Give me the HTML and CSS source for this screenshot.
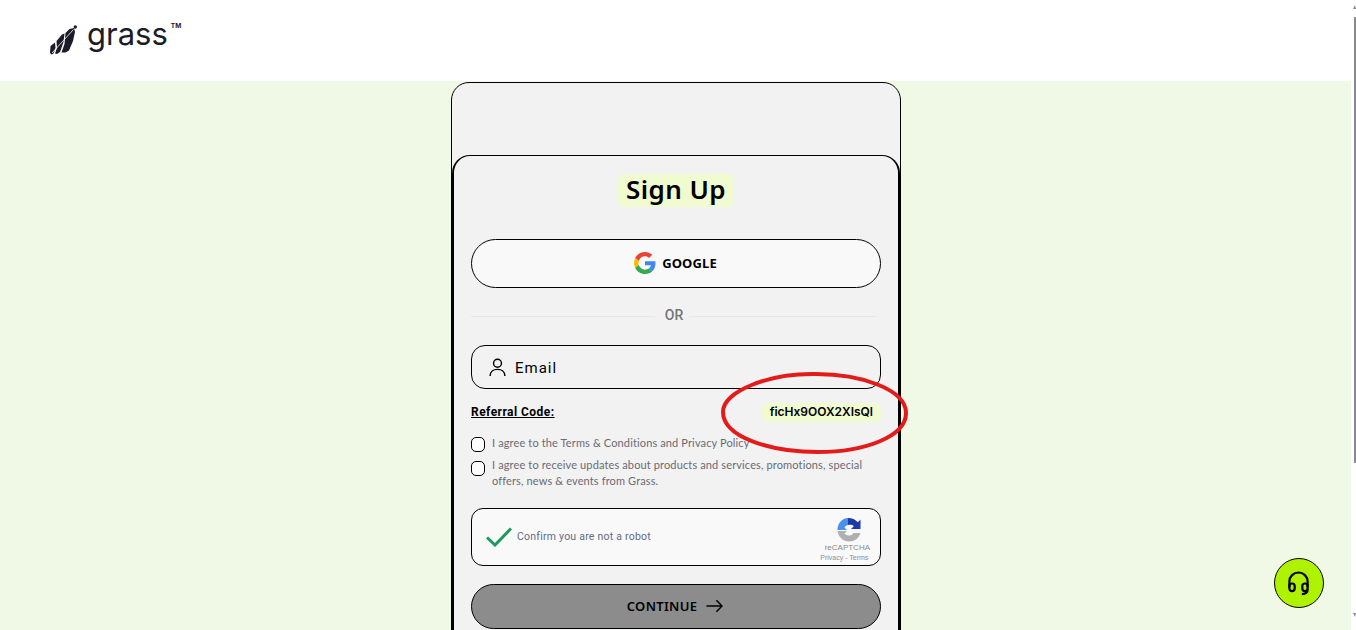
FILE: index.html
```html
<!DOCTYPE html>
<html lang="en">
  <head>
    <meta charset="UTF-8" />
    <meta name="viewport" content="width=device-width, initial-scale=1.0" />
    <title>Sign Up - Grass</title>
    <link rel="stylesheet" href="styles.css">
  </head>
  <body>
    <div class="page">
      <header class="topbar">
        <svg class="logo-mark" viewBox="0 0 27 30" fill="#1c1c28">
          <path d="M0.500 21 5 17.500 5.500 23 3.500 28.500 1.500 29.500 0 28z" />
          <path d="M6.500 16 12 9.500 14.500 8.500 13.500 17 10 27 7 29 5 28.500 7 23z" />
          <path d="M15.500 8 19.500 4 24 3 25 7 23 16 19 25.500 15.500 27.500 11.500 27.500 14.500 19z" />
          <path d="M2 28 23.500 4.500" fill="none" stroke="#fff" stroke-width="0.800" />
          <circle cx="25.300" cy="2" r="1.700" />
        </svg>
        <span class="logo-text">grass</span>
        <span class="logo-tm">TM</span>
      </header>

      <main class="main">
        <div class="card-back">
          <div class="card">
            <div class="title-row">
              <h1 class="title">Sign Up</h1>
            </div>

            <button class="google-btn">
              <svg class="google-icon" viewBox="0 0 48 48">
                <path fill="#ea4335" d="M24 9.500c3.500 0 6.700 1.300 9.100 3.500l6.800-6.800C35.800 2.400 30.300 0 24 0 14.600 0 6.500 5.400 2.600 13.200l7.900 6.200C12.400 13.700 17.700 9.500 24 9.500z" />
                <path fill="#4285f4" d="M46.900 24.500c0-1.600-.1-3.100-.4-4.500H24v9h12.900c-.6 3-2.200 5.500-4.700 7.200l7.700 6c4.500-4.200 7-10.300 7-17.700z" />
                <path fill="#fbbc05" d="M10.500 28.600C10 27.200 9.700 25.600 9.700 24s.3-3.200.8-4.600l-7.900-6.200C.9 16.500 0 20.100 0 24s.9 7.500 2.600 10.800z" />
                <path fill="#34a853" d="M24 48c6.500 0 11.900-2.100 15.900-5.800l-7.700-6c-2.200 1.400-4.900 2.300-8.200 2.300-6.300 0-11.600-4.200-13.500-9.900l-7.900 6.200C6.500 42.600 14.600 48 24 48z" />
              </svg>
              GOOGLE
            </button>

            <div class="divider">
              <span class="divider-line"></span>
              <span class="divider-text">OR</span>
              <span class="divider-line short"></span>
            </div>

            <div class="email-field">
              <svg class="user-icon" viewBox="0 0 18 20" fill="none" stroke="#000" stroke-width="1.500">
                <circle cx="9" cy="5.500" r="4.200" />
                <path d="M1.200 19c0-4.400 3.400-7 7.800-7s7.800 2.600 7.800 7" />
              </svg>
              <span class="email-label">Email</span>
            </div>

            <div class="referral-row">
              <span class="referral-label">Referral Code:</span>
              <span class="referral-code">ficHx9OOX2XIsQl</span>
            </div>

            <div class="check-row first">
              <span class="check-box"></span>
              <span class="check-text">I agree to the Terms &amp; Conditions and Privacy Policy</span>
            </div>
            <div class="check-row second">
              <span class="check-box"></span>
              <span class="check-text">I agree to receive updates about products and services, promotions, special offers, news &amp; events from Grass.</span>
            </div>

            <div class="captcha">
              <svg class="captcha-check" viewBox="0 0 26 20" fill="none" stroke="#1a9a5e" stroke-width="3">
                <path d="M1 10.500 9 18 25 1.500" />
              </svg>
              <span class="captcha-text">Confirm you are not a robot</span>
              <div class="captcha-brand">
                <svg class="recaptcha-icon" viewBox="0 0 24 24">
                  <path fill="#1c3aa9" d="M11 0c4 0 7.500 1.500 9.800 4.200L23.500 1.500V11h-9.500l2.800-2.800C15.500 7 14 6.500 11 7z" />
                  <path fill="#4a90f0" d="M11 0v7C9 7.500 8 8.500 7.500 9.500L10 12H0.500V11C1 5 5 0.500 11 0z" />
                  <path fill="#b0b0b0" d="M0.500 13h9.500L7.500 15.500C8.500 16.800 10 17.500 12 17.500c2 0 3.500-.8 4.500-2.500h7C22 20 17.500 23.500 12 23.500 6 23.500 1.500 19 0.500 13z" />
                </svg>
                <span class="recaptcha-name">reCAPTCHA</span>
                <span class="recaptcha-links">Privacy - Terms</span>
              </div>
            </div>

            <button class="continue-btn">
              CONTINUE
              <svg class="arrow-icon" viewBox="0 0 18 14" fill="none" stroke="#000" stroke-width="1.600">
                <path d="M0.500 7H17M11 1l6 6-6 6" />
              </svg>
            </button>
          </div>
        </div>
      </main>
    </div>

    <div class="scrollbar">
      <span class="scroll-arrow up"></span>
      <span class="scroll-thumb"></span>
      <span class="scroll-arrow down"></span>
    </div>

    <!-- hand drawn marker round the referral code -->
    <svg class="marker" viewBox="0 0 190 84" fill="none" stroke="#e31b1b" stroke-width="4">
      <path d="M96 3C140 3 186 18 186 42c0 24-42 39-88 39C50 81 3 66 3 41 3 20 50 2 96 3z" />
    </svg>

    <button class="help-btn">
      <svg viewBox="0 0 24 26" fill="none" stroke="#000" stroke-width="2.300">
        <path d="M2.500 17v-6a9.500 9.500 0 0 1 19 0v6" />
        <rect x="2.500" y="13" width="5.500" height="8" rx="2.700" />
        <rect x="16" y="13" width="5.500" height="8" rx="2.700" />
        <path d="M21.500 19c0 3-2 5-6 5" />
      </svg>
    </button>
  </body>
</html>
```

FILE: styles.css
```css
* {
  margin: 0;
  padding: 0;
  box-sizing: border-box;
}

html,
body {
  height: 100%;
  overflow: hidden;
}

body {
  display: flex;
  background: #fff;
  font-family: "Roboto", sans-serif;
  color: #000;
}

button {
  font-family: inherit;
  color: inherit;
  cursor: pointer;
}

.page {
  flex: 1;
  min-width: 0;
  display: flex;
  flex-direction: column;
}

/* header */
.topbar {
  height: 81px;
  flex-shrink: 0;
  background: #fff;
  display: flex;
  align-items: flex-start;
  padding: 0 0 0 50px;
}

.logo-mark {
  width: 27px;
  height: 30px;
  margin-top: 25px;
}

.logo-text {
  font-family: "Inter", sans-serif;
  font-size: 31px;
  font-weight: 400;
  line-height: 40px;
  margin: 14px 0 0 10px;
  color: #1c1c28;
}

.logo-tm {
  font-family: "Inter", sans-serif;
  font-size: 6.500px;
  font-weight: 700;
  line-height: 10px;
  margin: 21px 0 0 3px;
  color: #1c1c28;
}

/* card */
.main {
  flex: 1;
  min-height: 0;
  background: #f0f9e5;
  display: flex;
  justify-content: center;
  padding-top: 1px;
  padding-left: 1px;
  overflow: hidden;
}

.card-back {
  width: 450px;
  height: 700px;
  flex-shrink: 0;
  background: #f2f2f2;
  border: 1px solid #000;
  border-radius: 18px 18px 0 0;
  padding-top: 72px;
}

.card {
  height: 100%;
  background: #f2f2f2;
  border: 2px solid #000;
  border-bottom: 0;
  border-top-width: 1px;
  border-radius: 18px 18px 0 0;
  padding: 18px 17px 0;
}

.title-row {
  display: flex;
  justify-content: center;
}

.title {
  font-family: "Noto Sans", sans-serif;
  font-size: 26px;
  font-weight: 600;
  line-height: 31px;
  letter-spacing: 0.400px;
  padding: 0 8px;
  height: 33px;
  background: #f0fbd0;
  border-radius: 6px;
}

.google-btn {
  width: 410px;
  height: 49px;
  margin-top: 32px;
  background: #f9f9f9;
  border: 1px solid #000;
  border-radius: 25px;
  display: flex;
  align-items: center;
  justify-content: center;
  gap: 6px;
  padding: 0 1px 2px 0;
  font-family: "Noto Sans", sans-serif;
  font-size: 13px;
  font-weight: 700;
  letter-spacing: 0.100px;
}

.google-icon {
  width: 22px;
  height: 22px;
}

.divider {
  width: 406px;
  display: flex;
  align-items: center;
  margin-top: 18px;
  height: 20px;
}

.divider-line {
  height: 1px;
  width: 184px;
  background: #e2e8f0;
}

.divider-line.short {
  width: 188px;
}

.divider-text {
  flex: 1;
  text-align: center;
  padding: 0 0 2px 4px;
  font-size: 14px;
  font-weight: 500;
  color: #757575;
}

.email-field {
  width: 410px;
  height: 44px;
  margin-top: 19px;
  border: 1px solid #000;
  border-radius: 14px;
  display: flex;
  align-items: center;
  padding-left: 17px;
  gap: 9px;
}

.user-icon {
  width: 17px;
  height: 19px;
}

.email-label {
  font-size: 15px;
  letter-spacing: 1px;
  padding-top: 2px;
  color: #000;
}

.referral-row {
  width: 410px;
  display: flex;
  justify-content: space-between;
  align-items: center;
  margin-top: 14px;
  height: 19px;
}

.referral-label {
  font-size: 12px;
  font-weight: 700;
  letter-spacing: 0.450px;
  padding-bottom: 2px;
  text-decoration: underline;
}

.referral-code {
  font-family: "Inter", sans-serif;
  font-size: 12px;
  font-weight: 600;
  line-height: 18px;
  height: 19px;
  padding: 0 8px;
  background: #f0fbd0;
  border-radius: 6px;
}

.check-row {
  width: 410px;
  display: flex;
  align-items: flex-start;
  gap: 7px;
}

.check-row.first {
  margin-top: 13px;
}

.check-row.first .check-box {
  margin-top: 2px;
}

.check-row.second {
  margin-top: 5px;
}

.check-row.second .check-box {
  margin-top: 4px;
}

.check-box {
  width: 14px;
  height: 15px;
  flex-shrink: 0;
  background: #fff;
  border: 1.500px solid #000;
  border-radius: 5px;
}

.check-text {
  font-family: "Lato", sans-serif;
  font-size: 11px;
  line-height: 16px;
  letter-spacing: 0.130px;
  color: #6a6a72;
  max-width: 385px;
}

.captcha {
  width: 410px;
  height: 58px;
  margin-top: 19px;
  background: #f9f9f9;
  border: 1px solid #000;
  border-radius: 12px;
  display: flex;
  align-items: center;
  padding: 0 10px 0 14px;
}

.captcha-check {
  width: 26px;
  height: 20px;
}

.captcha-text {
  flex: 1;
  margin-left: 5px;
  padding-bottom: 1px;
  font-size: 10.500px;
  letter-spacing: 0.230px;
  color: #5f6b7e;
}

.captcha-brand {
  display: flex;
  flex-direction: column;
  align-items: center;
  font-family: "Liberation Sans", sans-serif;
  color: #8a8a8a;
  padding-top: 6px;
}

.recaptcha-icon {
  width: 24px;
  height: 24px;
  margin-left: 10px;
}

.recaptcha-name {
  font-size: 8px;
  line-height: 11px;
  padding-left: 6px;
}

.recaptcha-links {
  font-size: 7px;
  line-height: 9px;
  color: #8a8fa0;
}

.continue-btn {
  width: 410px;
  height: 45px;
  margin-top: 18px;
  background: #8c8c8c;
  border: 1px solid #000;
  border-radius: 23px;
  display: flex;
  align-items: center;
  justify-content: center;
  gap: 9px;
  padding: 0 2px 1px 0;
  font-family: "Noto Sans", sans-serif;
  font-size: 13px;
  font-weight: 600;
  letter-spacing: 0.300px;
}

.arrow-icon {
  width: 17px;
  height: 14px;
}

/* browser scrollbar */
.scrollbar {
  width: 5px;
  flex-shrink: 0;
  background: #fff;
  display: flex;
  flex-direction: column;
  align-items: flex-end;
}

.scroll-arrow {
  border-left: 2px solid transparent;
  border-right: 1px solid transparent;
}

.scroll-arrow.up {
  margin-top: 5px;
  border-bottom: 4px solid #8a8a8a;
}

.scroll-arrow.down {
  margin-top: 150px;
  border-top: 4px solid #8a8a8a;
}

.scroll-thumb {
  height: 446px;
  width: 2px;
  margin-top: 8px;
  background: #8a8a8a;
}

/* overlays */
.marker {
  position: absolute;
  left: 720px;
  top: 371px;
  width: 190px;
  height: 84px;
}

.help-btn {
  position: absolute;
  left: 1274px;
  top: 558px;
  width: 50px;
  height: 50px;
  background: #aef200;
  border: 1px solid #000;
  border-radius: 50%;
  display: flex;
  align-items: center;
  justify-content: center;
  padding-right: 2px;
}

.help-btn svg {
  width: 23px;
  height: 25px;
}
```
